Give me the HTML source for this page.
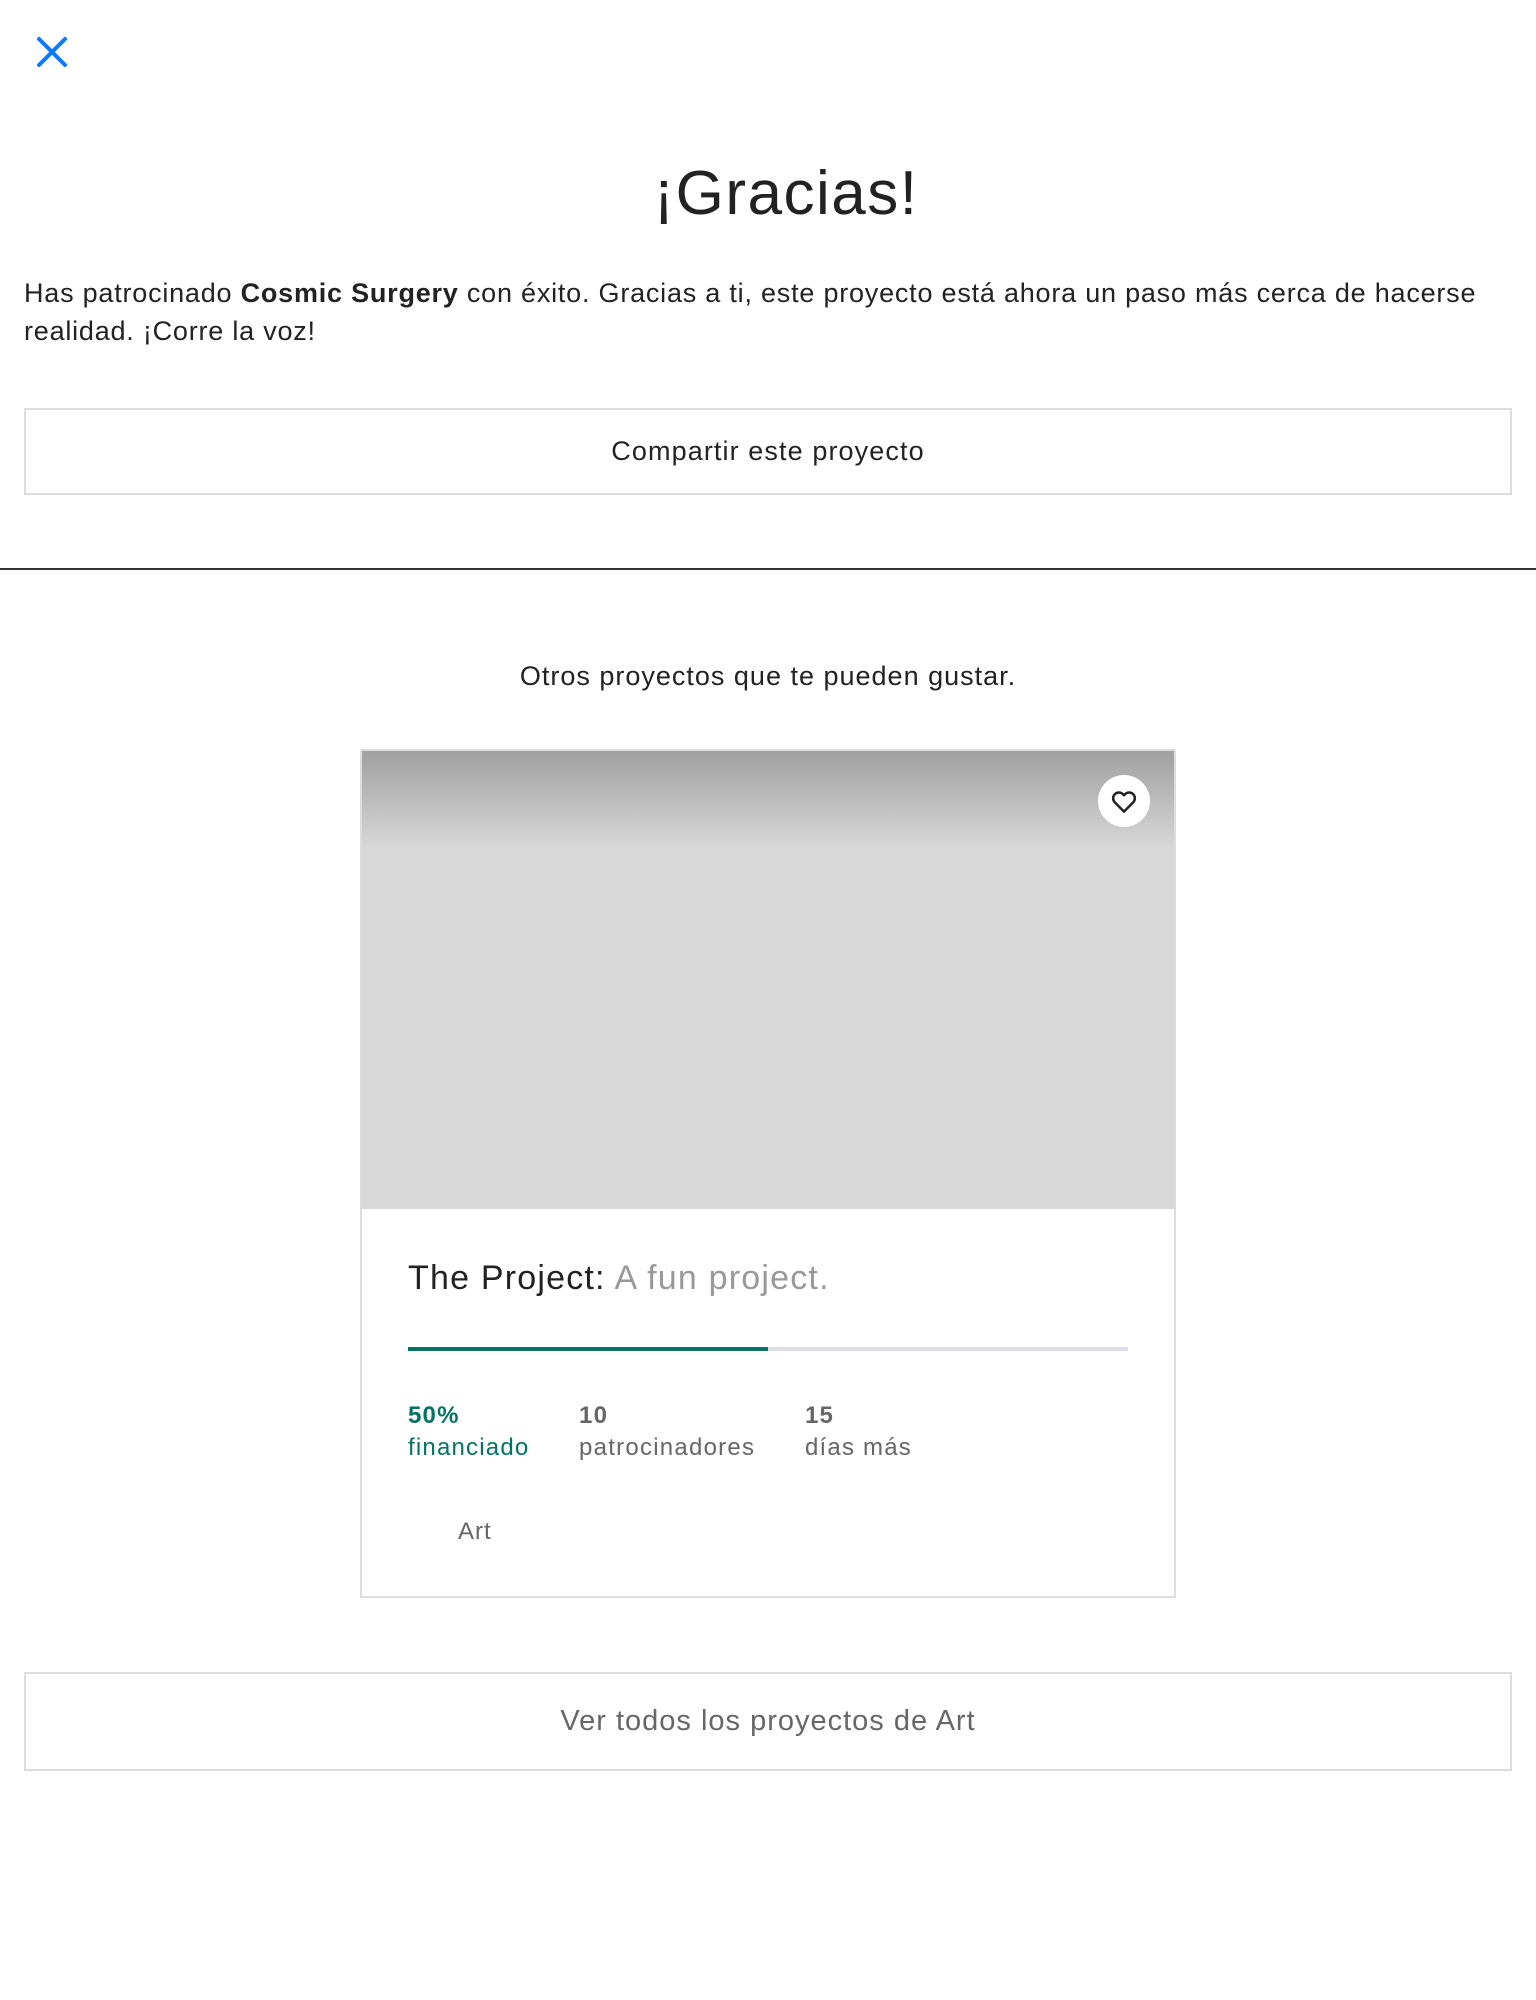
<!DOCTYPE html>
<html><head><meta charset="utf-8"><style>
*{margin:0;padding:0;box-sizing:border-box}
body{width:1536px;height:2000px;background:#fff;font-family:"Liberation Sans",sans-serif;color:#222;position:relative;overflow:hidden}
.a{position:absolute}
.btn{position:absolute;left:24px;width:1488px;border:2px solid #ddd;display:flex;align-items:center;justify-content:center}
</style></head><body>
<svg class="a" style="left:36px;top:36px" width="32" height="32" viewBox="0 0 32 32"><path d="M3 3L29 29M29 3L3 29" stroke="#0a7aff" stroke-width="4" stroke-linecap="round"/></svg>
<div class="a" style="left:0;width:1536px;top:156px;text-align:center;font-size:62px;line-height:76px;color:#222;letter-spacing:1.5px;padding-left:36px">¡Gracias!</div>
<div class="a" style="left:24px;width:1490px;top:274px;font-size:27px;line-height:38px;letter-spacing:0.78px">Has patrocinado <b>Cosmic Surgery</b> con éxito. Gracias a ti, este proyecto está ahora un paso más cerca de hacerse realidad. ¡Corre la voz!</div>
<div class="btn" style="top:408px;height:87px;font-size:27px;letter-spacing:1.1px">Compartir este proyecto</div>
<div class="a" style="left:0;top:568px;width:1536px;height:2px;background:#333"></div>
<div class="a" style="left:0;width:1536px;top:658px;text-align:center;font-size:27px;line-height:36px;letter-spacing:1px">Otros proyectos que te pueden gustar.</div>
<div class="a" style="left:360px;top:749px;width:816px;height:849px;border:2px solid #ddd">
<div style="height:458px;background:linear-gradient(#a0a0a0 0px,#d9d9d9 100px,#d9d9d9)"></div>
<div class="a" style="left:736px;top:24px;width:52px;height:52px;border-radius:50%;background:#fff;display:flex;align-items:center;justify-content:center">
<svg width="30" height="30" viewBox="0 0 24 24"><path d="M12 20.5l-7.5-7.6a4.6 4.6 0 0 1 6.6-6.4L12 7.4l.9-.9a4.6 4.6 0 0 1 6.6 6.4z" fill="none" stroke="#222" stroke-width="2" stroke-linejoin="round"/></svg></div>
<div class="a" style="left:46px;top:505px;font-size:34px;line-height:44px;letter-spacing:1.2px">The Project: <span style="color:#999">A fun project.</span></div>
<div class="a" style="left:46px;top:596px;width:720px;height:4px;background:#dcdde6"></div>
<div class="a" style="left:46px;top:596px;width:360px;height:4px;background:#037362"></div>
<div class="a" style="left:46px;top:649px;font-size:24px;line-height:32px;color:#037362;letter-spacing:1.2px"><b>50%</b><br>financiado</div>
<div class="a" style="left:217px;top:649px;font-size:24px;line-height:32px;color:#666;letter-spacing:1.25px"><b>10</b><br>patrocinadores</div>
<div class="a" style="left:443px;top:649px;font-size:24px;line-height:32px;color:#666;letter-spacing:1.2px"><b>15</b><br>días más</div>
<div class="a" style="left:96px;top:765px;font-size:24px;line-height:32px;color:#666;letter-spacing:1px">Art</div>
</div>
<div class="btn" style="top:1672px;height:99px;font-size:29px;color:#666;letter-spacing:1px">Ver todos los proyectos de Art</div>
</body></html>
